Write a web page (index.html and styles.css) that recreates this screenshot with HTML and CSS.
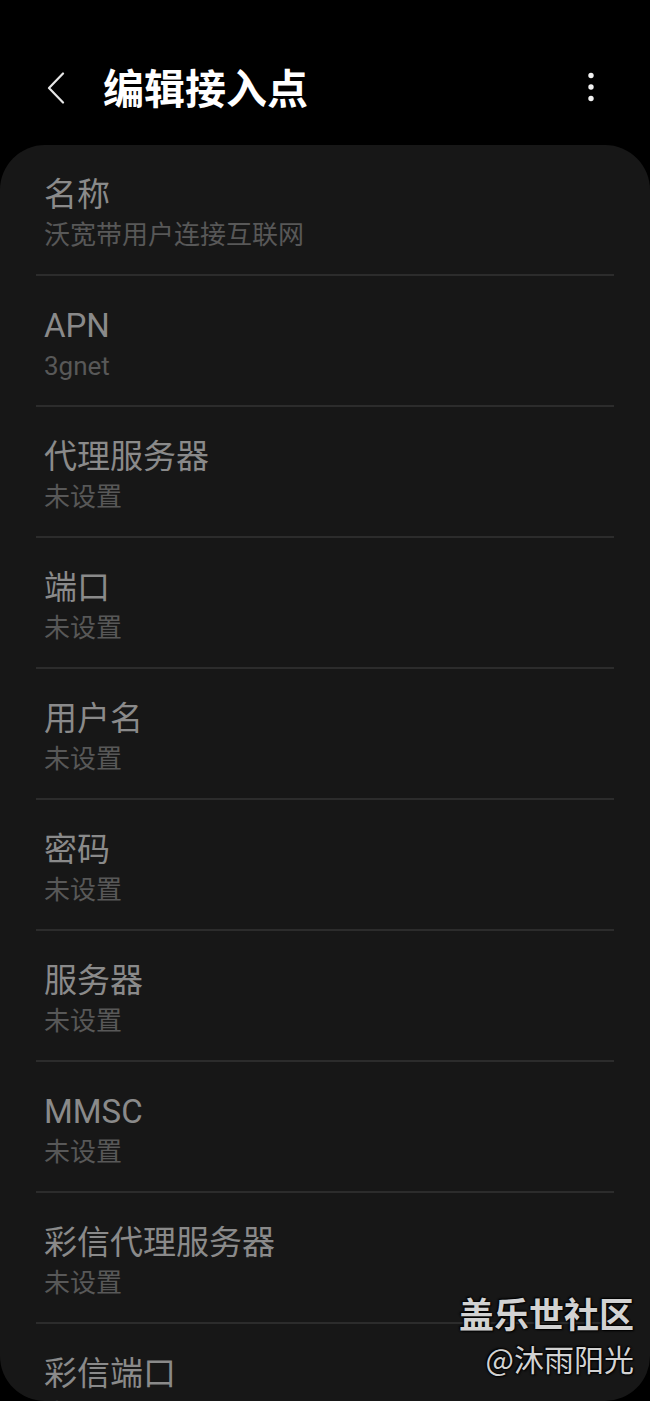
FILE: index.html
```html
<!DOCTYPE html>
<html lang="zh-CN">
<head>
  <meta charset="UTF-8">
  <title>编辑接入点</title>
  <meta name="viewport" content="width=device-width, initial-scale=1.0">
  <link rel="stylesheet" href="styles.css">
</head>
<body>
  <header class="appbar">
    <svg class="back" width="20" height="32" viewBox="0 0 20 32" aria-hidden="true">
      <path d="M17 1.5 L3 16 L17 30.5" fill="none" stroke="#e6e6e6" stroke-width="2.2" stroke-linecap="round" stroke-linejoin="round"/>
    </svg>
    <h1>编辑接入点</h1>
    <svg class="more" width="8" height="30" viewBox="0 0 8 30" aria-hidden="true">
      <circle cx="4" cy="3.5" r="2.7" fill="#f2f2f2"/>
      <circle cx="4" cy="15" r="2.7" fill="#f2f2f2"/>
      <circle cx="4" cy="26.5" r="2.7" fill="#f2f2f2"/>
    </svg>
  </header>

  <main class="card">
    <div class="row"><div class="label">名称</div><div class="value">沃宽带用户连接互联网</div></div>
    <div class="row"><div class="label">APN</div><div class="value">3gnet</div></div>
    <div class="row"><div class="label">代理服务器</div><div class="value">未设置</div></div>
    <div class="row"><div class="label">端口</div><div class="value">未设置</div></div>
    <div class="row"><div class="label">用户名</div><div class="value">未设置</div></div>
    <div class="row"><div class="label">密码</div><div class="value">未设置</div></div>
    <div class="row"><div class="label">服务器</div><div class="value">未设置</div></div>
    <div class="row"><div class="label">MMSC</div><div class="value">未设置</div></div>
    <div class="row"><div class="label">彩信代理服务器</div><div class="value">未设置</div></div>
    <div class="row"><div class="label">彩信端口</div><div class="value">未设置</div></div>
  </main>

  <div class="watermark">
    <div class="wm-site">盖乐世社区</div>
    <div class="wm-user">@沐雨阳光</div>
  </div>
</body>
</html>
```

FILE: styles.css
```css
:root {
  --bg: #000;
  --card: #171717;
  --label: #8a8a8a;
  --value: #585858;
  --line: #2c2c2c;
}

html, body {
  height: 1401px;
  overflow: hidden;
}

body {
  margin: 0;
  background: var(--bg);
  font-family: Roboto, "Noto Sans CJK SC", sans-serif;
  position: relative;
}

.appbar {
  height: 145px;
  display: flex;
  align-items: center;
  box-sizing: border-box;
  padding: 28px 0 0 46px;
}

.back {
  flex: none;
  margin-top: 2px;
}

.appbar h1 {
  margin: 0 0 0 37px;
  flex: 1;
  font-size: 41px;
  font-weight: 700;
  color: #fff;
  line-height: 1;
  font-family: "Noto Sans CJK SC", sans-serif;
}

.more {
  flex: none;
  margin-right: 55px;
}

.card {
  height: 1256px;
  overflow: hidden;
  background: var(--card);
  border-radius: 45px;
}

.row {
  margin: 0 36px;
  padding: 30px 8px 19px;
  border-bottom: 2px solid var(--line);
}

.label {
  font-size: 33px;
  line-height: 40px;
  color: var(--label);
}

.value {
  font-size: 26px;
  line-height: 40px;
  color: var(--value);
}

.watermark {
  position: absolute;
  right: 16px;
  top: 1290px;
  text-align: right;
  color: #d2d2d2;
  text-shadow: 0 0 2px #000, 1px 1px 2px #000, -1px -1px 2px #000;
  font-family: "Noto Sans CJK SC", sans-serif;
}

.wm-site {
  font-size: 35px;
  font-weight: 700;
  line-height: 46px;
}

.wm-user {
  font-size: 30px;
  line-height: 44px;
}
```
